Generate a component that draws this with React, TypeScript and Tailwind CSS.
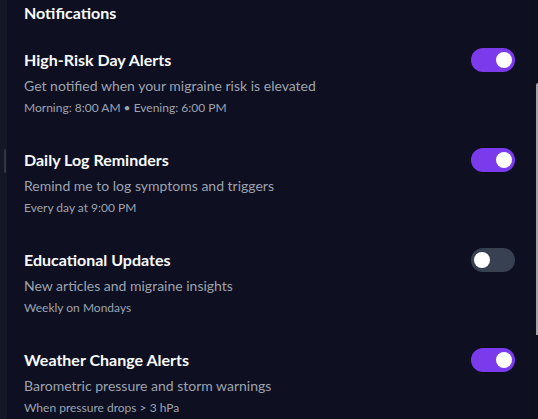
interface NotificationRowProps {
  title: string;
  description: string;
  detail: string;
  enabled: boolean;
}

const Toggle = ({ enabled }: { enabled: boolean }) => {
  return (
    <div
      className={`flex h-6 w-11 shrink-0 items-center rounded-full px-[3px] ${
        enabled ? "justify-end bg-[#7c3aed]" : "justify-start bg-[#374151]"
      }`}
    >
      <div className="h-4 w-4 rounded-full bg-white" />
    </div>
  );
};

const NotificationRow = ({ title, description, detail, enabled }: NotificationRowProps) => {
  return (
    <div className="flex items-start justify-between py-4">
      <div className="flex flex-col">
        <div className="text-base leading-6 font-bold text-[#f9fafb]">{title}</div>
        <div className="mt-1 text-sm leading-5 text-[#9ca3af]">{description}</div>
        <div className="mt-1 text-xs leading-4 text-[#9ca3af]">{detail}</div>
      </div>
      <Toggle enabled={enabled} />
    </div>
  );
};

const rows: NotificationRowProps[] = [
  {
    title: "High-Risk Day Alerts",
    description: "Get notified when your migraine risk is elevated",
    detail: "Morning: 8:00 AM \u2022 Evening: 6:00 PM",
    enabled: true,
  },
  {
    title: "Daily Log Reminders",
    description: "Remind me to log symptoms and triggers",
    detail: "Every day at 9:00 PM",
    enabled: true,
  },
  {
    title: "Educational Updates",
    description: "New articles and migraine insights",
    detail: "Weekly on Mondays",
    enabled: false,
  },
  {
    title: "Weather Change Alerts",
    description: "Barometric pressure and storm warnings",
    detail: "When pressure drops > 3 hPa",
    enabled: true,
  },
];

export default function App() {
  return (
    <div
      className="flex h-[419px] w-[538px] overflow-hidden bg-[#0e1022]"
      style={{ fontFamily: 'Lato, "Noto Sans", sans-serif' }}
    >
      {/* left gutter */}
      <div className="flex w-[7px] shrink-0 flex-col bg-[#131726] pt-[149px] pl-[4px]">
        <div className="h-6 w-[2px] rounded-full bg-[#2f3646]" />
      </div>

      <div className="flex flex-1 flex-col pl-[17px] pr-[15px] pt-[1px]">
        <div className="mb-[7px] text-base leading-6 font-bold text-[#f9fafb]">Notifications</div>
        {rows.map((row) => (
          <NotificationRow key={row.title} {...row} />
        ))}
      </div>

      {/* right scrollbar */}
      <div className="flex w-[8px] shrink-0 justify-end bg-[#0c0e1d] pt-[83px]">
        <div className="h-[252px] w-[2px] rounded-tl-sm bg-[#a3a3a3]" />
      </div>
    </div>
  );
}
